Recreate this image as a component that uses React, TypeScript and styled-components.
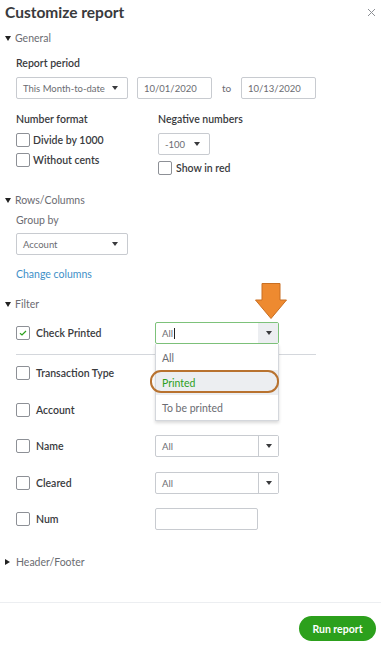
import styled, { createGlobalStyle } from "styled-components";

const GlobalStyle = createGlobalStyle`
  html, body {
    margin: 0;
    padding: 0;
    background: #fff;
  }
  body {
    font-family: Lato, "Open Sans", Arial, sans-serif;
    color: #393a3d;
  }
  * { box-sizing: border-box; }
`;

const Page = styled.div`
  position: relative;
  width: 381px;
  height: 649px;
  overflow: hidden;
  background: #fff;
`;

const Header = styled.div`
  height: 24px;
  display: flex;
  align-items: center;
  justify-content: space-between;
  padding: 0 5px 0 5px;
`;

const Title = styled.div`
  font-size: 15.5px;
  font-weight: 700;
  color: #393a3d;
`;

const Close = styled.button`
  border: 0;
  background: none;
  padding: 0;
  width: 9px;
  height: 9px;
  display: flex;
  cursor: pointer;
`;

const Body = styled.div`
  padding: 0 0 0 5px;
`;

const Toggle = styled.div<{ $top: number; $open?: boolean }>`
  margin-top: ${(p) => p.$top}px;
  height: 16px;
  display: flex;
  align-items: center;
  gap: 4px;
  font-size: 10.5px;
  color: #6b6c72;
  &::before {
    content: "";
    width: 0;
    height: 0;
    ${(p) =>
      p.$open
        ? `border-left: 3.5px solid transparent;
           border-right: 3.5px solid transparent;
           border-top: 5px solid #222;`
        : `border-top: 3.5px solid transparent;
           border-bottom: 3.5px solid transparent;
           border-left: 5px solid #222;
           margin-right: 2px;`}
  }
`;

const Indent = styled.div`
  padding-left: 11px;
`;

const Label = styled.div<{ $top: number; $light?: boolean }>`
  margin-top: ${(p) => p.$top}px;
  height: 16px;
  line-height: 16px;
  font-size: ${(p) => (p.$light ? 10.5 : 10.5)}px;
  font-weight: ${(p) => (p.$light ? 400 : 600)};
  color: ${(p) => (p.$light ? "#6b6c72" : "#393a3d")};
`;

const Row = styled.div<{ $top: number }>`
  margin-top: ${(p) => p.$top}px;
  display: flex;
  align-items: center;
`;

const Select = styled.div<{ $width: number }>`
  width: ${(p) => p.$width}px;
  height: 22px;
  border: 1px solid #c8cbd0;
  border-radius: 2px;
  display: flex;
  align-items: center;
  justify-content: space-between;
  padding: 0 9px 0 6px;
  font-size: 9.5px;
  color: #6b6c72;
  background: #fff;
`;

const Caret = styled.span`
  width: 0;
  height: 0;
  border-left: 3px solid transparent;
  border-right: 3px solid transparent;
  border-top: 4px solid #393a3d;
`;

const TextInput = styled.div<{ $width: number }>`
  width: ${(p) => p.$width}px;
  height: 22px;
  border: 1px solid #c8cbd0;
  border-radius: 2px;
  display: flex;
  align-items: center;
  padding: 0 6px;
  font-size: 9.5px;
  color: #6b6c72;
`;

const To = styled.span`
  width: 29px;
  text-align: center;
  font-size: 10px;
  color: #6b6c72;
`;

const Columns = styled.div`
  display: flex;
  margin-top: 12px;
`;

const Column = styled.div<{ $width: number }>`
  width: ${(p) => p.$width}px;
  display: flex;
  flex-direction: column;
`;

const CheckRow = styled.label<{ $top: number }>`
  margin-top: ${(p) => p.$top}px;
  height: 20px;
  display: flex;
  align-items: center;
  font-size: 10.5px;
  font-weight: 600;
  color: #393a3d;
`;

const Box = styled.span<{ $gap: number }>`
  width: 14px;
  height: 14px;
  border: 1px solid #8d9096;
  border-radius: 2px;
  margin-right: ${(p) => p.$gap}px;
  display: flex;
  align-items: center;
  justify-content: center;
  flex-shrink: 0;
`;

const Link = styled.div`
  margin-top: 11px;
  height: 16px;
  line-height: 16px;
  font-size: 10.5px;
  color: #3e8fc7;
`;

const FilterRow = styled.div<{ $top: number }>`
  margin-top: ${(p) => p.$top}px;
  height: 22px;
  display: flex;
  align-items: center;
`;

const FilterLabel = styled.label`
  width: 139px;
  display: flex;
  align-items: center;
  font-size: 10.5px;
  font-weight: 600;
  color: #393a3d;
`;

const Combo = styled.div<{ $active?: boolean }>`
  position: relative;
  width: 124px;
  height: 22px;
  border: 1px solid ${(p) => (p.$active ? "#7dc27a" : "#c8cbd0")};
  border-radius: 2px;
  display: flex;
  font-size: 9.5px;
  color: #6b6c72;
`;

const ComboText = styled.div`
  flex: 1;
  display: flex;
  align-items: center;
  padding-left: 6px;
`;

const Cursor = styled.span`
  display: inline-block;
  width: 1px;
  height: 11px;
  background: #222;
  margin-left: 1px;
`;

const ComboButton = styled.div<{ $active?: boolean }>`
  width: 20px;
  border-left: 1px solid ${(p) => (p.$active ? "transparent" : "#c8cbd0")};
  background: ${(p) => (p.$active ? "#eceef1" : "#fff")};
  display: flex;
  align-items: center;
  justify-content: center;
`;

const Menu = styled.div`
  position: absolute;
  left: -1px;
  top: 21px;
  width: 124px;
  padding-top: 1px;
  background: #fff;
  border: 1px solid #d4d7dc;
  border-top: 0;
  box-shadow: 0 2px 3px rgba(0, 0, 0, 0.15);
  z-index: 2;
`;

const MenuItem = styled.div<{ $selected?: boolean }>`
  position: relative;
  height: 25px;
  display: flex;
  align-items: center;
  padding-left: 6px;
  font-size: 10.5px;
  color: ${(p) => (p.$selected ? "#2ca01c" : "#6b6c72")};
  background: ${(p) => (p.$selected ? "#eceef1" : "#fff")};
`;

const Ring = styled.div`
  position: absolute;
  left: -6px;
  right: -1px;
  top: 0;
  bottom: 2px;
  border: 2.5px solid #b8722f;
  border-radius: 11px;
`;

const Divider = styled.div`
  margin-top: 10px;
  width: 300px;
  height: 1px;
  background: #d4d7dc;
`;

const Footer = styled.div`
  margin-top: 32px;
  border-top: 1px solid #eceef1;
  display: flex;
  justify-content: flex-end;
  padding: 13px 5px 0 0;
`;

const RunButton = styled.button`
  width: 77px;
  height: 25px;
  border: 0;
  border-radius: 13px;
  background: #2ca01c;
  color: #fff;
  font-family: Lato, "Open Sans", Arial, sans-serif;
  font-size: 10.5px;
  font-weight: 700;
`;

const Arrow = styled.svg`
  position: absolute;
  left: 255px;
  top: 283px;
`;

const CheckMark = () => (
  <svg width="8" height="6" viewBox="0 0 8 6">
    <path d="M1 3.2 L3 5 L7 1" fill="none" stroke="#2ca01c" strokeWidth="1.2" />
  </svg>
);

type FilterItem = { label: string; kind: "combo" | "text" | "none"; top: number };

const filters: FilterItem[] = [
  { label: "Transaction Type", kind: "none", top: 7 },
  { label: "Account", kind: "none", top: 15 },
  { label: "Name", kind: "combo", top: 14 },
  { label: "Cleared", kind: "combo", top: 15 },
  { label: "Num", kind: "text", top: 14 },
];

export default function App() {
  return (
    <Page>
      <GlobalStyle />
      <Header>
        <Title>Customize report</Title>
        <Close aria-label="Close">
          <svg width="9" height="9" viewBox="0 0 9 9">
            <path d="M1 1 L8 8 M8 1 L1 8" stroke="#8d9096" strokeWidth="1" />
          </svg>
        </Close>
      </Header>
      <Body>
        <Toggle $top={6} $open>General</Toggle>
        <Indent>
          <Label $top={9}>Report period</Label>
          <Row $top={6}>
            <Select $width={112}>
              This Month-to-date <Caret />
            </Select>
            <span style={{ width: 9 }} />
            <TextInput $width={75}>10/01/2020</TextInput>
            <To>to</To>
            <TextInput $width={75}>10/13/2020</TextInput>
          </Row>
          <Columns>
            <Column $width={142}>
              <Label $top={0}>Number format</Label>
              <CheckRow $top={3}>
                <Box $gap={3} />
                Divide by 1000
              </CheckRow>
              <CheckRow $top={0}>
                <Box $gap={3} />
                Without cents
              </CheckRow>
            </Column>
            <Column $width={120}>
              <Label $top={0}>Negative numbers</Label>
              <Row $top={6}>
                <Select $width={52}>
                  -100 <Caret />
                </Select>
              </Row>
              <CheckRow $top={3}>
                <Box $gap={4} />
                Show in red
              </CheckRow>
            </Column>
          </Columns>
        </Indent>

        <Toggle $top={14} $open>Rows/Columns</Toggle>
        <Indent>
          <Label $top={4} $light>Group by</Label>
          <Row $top={5}>
            <Select $width={112}>
              Account <Caret />
            </Select>
          </Row>
          <Link>Change columns</Link>
        </Indent>

        <Toggle $top={14} $open>Filter</Toggle>
        <Indent>
          <FilterRow $top={10}>
            <FilterLabel>
              <Box $gap={6}>
                <CheckMark />
              </Box>
              Check Printed
            </FilterLabel>
            <Combo $active>
              <ComboText>
                All<Cursor />
              </ComboText>
              <ComboButton $active>
                <Caret />
              </ComboButton>
              <Menu>
                <MenuItem>All</MenuItem>
                <MenuItem $selected>
                  Printed
                  <Ring />
                </MenuItem>
                <MenuItem>To be printed</MenuItem>
              </Menu>
            </Combo>
          </FilterRow>
          <Divider />
          {filters.map((f) => (
            <FilterRow key={f.label} $top={f.top}>
              <FilterLabel>
                <Box $gap={6} />
                {f.label}
              </FilterLabel>
              {f.kind === "combo" && (
                <Combo>
                  <ComboText>All</ComboText>
                  <ComboButton>
                    <Caret />
                  </ComboButton>
                </Combo>
              )}
              {f.kind === "text" && <TextInput $width={103} />}
            </FilterRow>
          ))}
        </Indent>

        <Toggle $top={24}>Header/Footer</Toggle>
      </Body>
      <Footer>
        <RunButton>Run report</RunButton>
      </Footer>
      <Arrow width="32" height="36" viewBox="0 0 32 36">
        <path
          d="M7 0.5 H25 V17 H31.5 L16 35.5 L0.5 17 H7 Z"
          fill="#ee8a30"
          stroke="#c96f22"
          strokeWidth="1"
        />
      </Arrow>
    </Page>
  );
}
